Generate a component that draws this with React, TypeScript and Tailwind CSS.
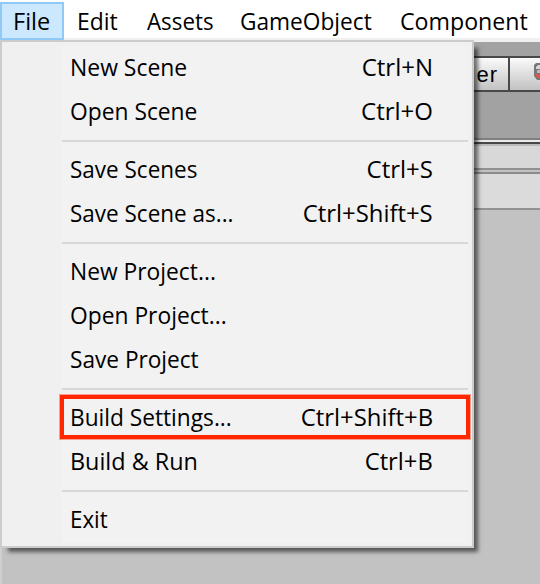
import React from 'react';

type Entry = { label: string; fit: string; keys?: string; keysFit?: string };

const menus = [
  { label: 'File', box: 'w-16 border-2 border-[#90c8f6] bg-[#cce8ff] pl-[11px]', fit: 'scale-x-[0.98]' },
  { label: 'Edit', box: 'w-[69px] pl-[13px]', fit: 'scale-x-[0.955]' },
  { label: 'Assets', box: 'w-[93px] pl-[13.5px]', fit: 'scale-x-[0.93]' },
  { label: 'GameObject', box: 'w-[160px] pl-[14px]', fit: 'scale-x-[0.945]' },
  { label: 'Component', box: 'w-[154px] pl-[14px]', fit: 'scale-x-[0.965]' },
];

const groups: Entry[][] = [
  [
    { label: 'New Scene', fit: 'scale-x-[0.955]', keys: 'Ctrl+N', keysFit: 'scale-x-[1]' },
    { label: 'Open Scene', fit: 'scale-x-[0.95]', keys: 'Ctrl+O', keysFit: 'scale-x-[1]' },
  ],
  [
    { label: 'Save Scenes', fit: 'scale-x-[0.937]', keys: 'Ctrl+S', keysFit: 'scale-x-[1]' },
    { label: 'Save Scene as...', fit: 'scale-x-[0.937]', keys: 'Ctrl+Shift+S', keysFit: 'scale-x-[0.995]' },
  ],
  [
    { label: 'New Project...', fit: 'scale-x-[0.95]' },
    { label: 'Open Project...', fit: 'scale-x-[0.95]' },
    { label: 'Save Project', fit: 'scale-x-[0.943]' },
  ],
  [
    { label: 'Build Settings...', fit: 'scale-x-[0.945]', keys: 'Ctrl+Shift+B', keysFit: 'scale-x-[0.995]' },
    { label: 'Build & Run', fit: 'scale-x-[0.975]', keys: 'Ctrl+B', keysFit: 'scale-x-[0.99]' },
  ],
  [{ label: 'Exit', fit: 'scale-x-[0.93]' }],
];

const MenuBar: React.FC = () => (
  <nav className="flex h-[38px] shrink-0 bg-white pt-0.5">
    {menus.map((m) => (
      <div key={m.label} className={`relative z-20 flex h-[38px] shrink-0 items-center whitespace-nowrap ${m.box}`}>
        <span className={`origin-left ${m.fit}`}>{m.label}</span>
      </div>
    ))}
  </nav>
);

const Row: React.FC<{ entry: Entry }> = ({ entry }) => (
  <div className="relative flex h-11 items-center justify-between whitespace-nowrap pb-0.5 pl-2 pr-[35px]">
    <span className={`origin-left ${entry.fit}`}>{entry.label}</span>
    {entry.keys && <span className={`origin-right ${entry.keysFit}`}>{entry.keys}</span>}
    {/* Highlight frame around the build settings entry */}
    {entry.label === 'Build Settings...' && (
      <div className="absolute -left-[2px] -right-[2px] -top-px bottom-px border-4 border-[#ff2600] outline outline-[#f8a090]" />
    )}
  </div>
);

const FileMenu: React.FC = () => (
  <div className="absolute left-0 top-10 z-10 w-[474px] border-2 border-[#ccc] bg-[#f0f0f0] p-1 shadow-[6px_6px_4px_-2px_rgba(0,0,0,0.55)]">
    <div className="ml-14 bg-[#f2f2f2]">
      {groups.map((group, i) => (
        <React.Fragment key={i}>
          {i > 0 && (
            <div className="flex h-3.5 items-center">
              <div className="h-0.5 w-full bg-[#d7d7d7]" />
            </div>
          )}
          {group.map((entry) => (
            <Row key={entry.label} entry={entry} />
          ))}
        </React.Fragment>
      ))}
    </div>
  </div>
);

const Editor: React.FC = () => (
  <div className="flex flex-1 flex-col border-l-2 border-[#cfcfcf] bg-[#c2c2c2]">
    <div className="h-1 bg-[#f0f0f0]" />
    <div className="flex h-24 justify-end bg-[#a2a2a2] pt-3.5">
      <div className="flex h-9 w-[80px] border-y-2 border-[#484848] bg-linear-to-b from-[#fbfbfb] to-[#c2c2c2]">
        <div className="flex w-[50px] items-center justify-end border-r-2 border-[#484848] pr-[10px] pt-px font-['Liberation_Sans',sans-serif] text-[22px] tracking-[1px]">
          er
        </div>
        <svg className="ml-6" width="6" height="32" viewBox="0 0 6 32">
          <path d="M6 5H2L0 7v11l3 4h3z" fill="#777" />
          <path d="M6 7H4L2 9v2h4z" fill="#d8d8d8" />
          <path d="M6 12H3v3h3z" fill="#bbb" />
          <path d="M2 16h2l2 2v3l-4-3z" fill="#f04a4a" />
        </svg>
      </div>
    </div>
    <div className="h-0.5 bg-[#808080]" />
    <div className="h-0.5 bg-[#ebebeb]" />
    <div className="h-0.5 bg-[#484848]" />
    <div className="h-0.5 bg-[#bababa]" />
    <div className="h-[22px] bg-[#d8d8d8]" />
    <div className="h-0.5 bg-[#909090]" />
    <div className="h-0.5 bg-[#c2c2c2]" />
    <div className="h-0.5 bg-[#8b8b8b]" />
    <div className="h-[34px] bg-[#dbdbdb]" />
    <div className="h-0.5 bg-[#929292]" />
  </div>
);

const App: React.FC = () => (
  <div className="relative flex h-[584px] w-[540px] flex-col overflow-hidden font-['Open_Sans',sans-serif] text-[24px] leading-none text-black">
    <MenuBar />
    <Editor />
    <FileMenu />
  </div>
);

export default App;
